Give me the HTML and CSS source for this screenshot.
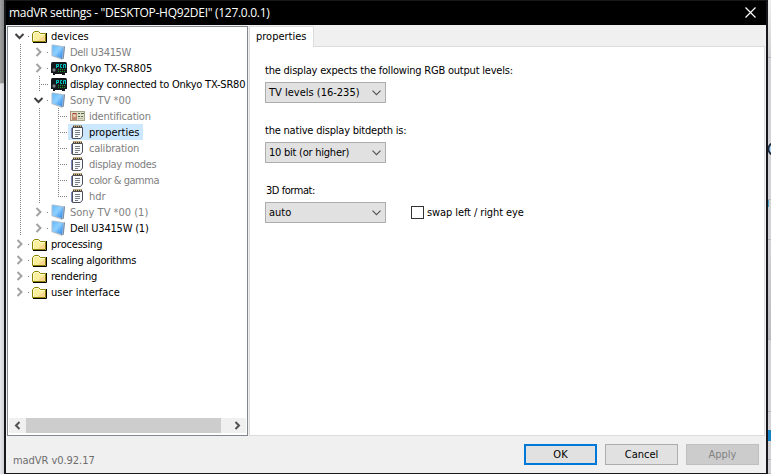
FILE: index.html
```html
<!DOCTYPE html>
<html lang="en">
<head>
<meta charset="utf-8">
<title>madVR settings</title>
<link rel="stylesheet" href="styles.css">
</head>
<body>
<svg class="defs" aria-hidden="true">
  <symbol id="folder" viewBox="0 0 16 16">
    <path d="M1 14.500H14.500V5" fill="none" stroke="#000" stroke-width="1"/>
    <path d="M.5 13.500V5.500L2.500 3.500H6.500L8.500 5.500H13.500V13.500Z" fill="#f9ee9c" stroke="#8c8400"/>
    <path d="M1.500 12.500V6L3 4.500H6L8 6.500H12.500" fill="none" stroke="#fffccf"/>
    <path d="M13 7V13H5Z" fill="#fbcb8a" opacity=".7"/>
  </symbol>
  <symbol id="monitor" viewBox="0 0 16 16">
    <path d="M.5 1L2 .5L14 2.500L12.500 14.500L10 15.500L.5 12Z" fill="#aebccc"/>
    <path d="M1.500 1.500L12.500 3.300L11 14L1.500 11.500Z" fill="url(#glass)"/>
    <path d="M13.500 2.500L12.300 14.500L10 15" fill="none" stroke="#667c98" stroke-width=".8"/>
  </symbol>
  <linearGradient id="glass" x1="0" y1="0" x2="1" y2="1">
    <stop offset="0" stop-color="#62baff"/><stop offset=".45" stop-color="#8fd0ff"/><stop offset="1" stop-color="#1f7fe8"/>
  </linearGradient>
  <symbol id="receiver" viewBox="0 0 16 16">
    <path d="M0 4Q0 2 1.500 2H14.500Q16 2 16 4V13H14V15H11V14H4V15H2V13H0Z" fill="#14171b"/>
    <path d="M5.500 8V4.500H7.500V6.500H6M11 4.500H9.500V7.500H11M12.500 8V4.500H15M14.500 4V8" fill="none" stroke="#00c4c0"/>
    <circle cx="3" cy="10" r="1.700" fill="#777b80"/>
    <path d="M7 9.500H15M7 11.500H15" stroke="#189c2b" stroke-dasharray="1 1"/>
  </symbol>
  <symbol id="card" viewBox="0 0 16 16">
    <rect x=".5" y="3.500" width="14" height="9" fill="#dedfc8" stroke="#a5a58a"/>
    <path d="M.5 3V13" stroke="#b28a72"/>
    <rect x="2" y="5" width="5" height="7" fill="#c08a72"/>
    <path d="M3 5.500H6" stroke="#a6402f"/>
    <circle cx="4.500" cy="7.500" r="1.500" fill="#ead0b5"/>
    <path d="M8 5.500H10M11 5.500H14M8 8.500H10M11 8.500H13" stroke="#526947"/>
    <path d="M8 10.500H13" stroke="#b8b79d"/>
  </symbol>
  <symbol id="notes" viewBox="0 0 16 16">
    <path d="M2.500 3.500H12.500V12L10.500 14.500H2.500Z" fill="#f8fafc" stroke="#4a505c"/>
    <path d="M1.500 4V14" stroke="#8087bb"/>
    <path d="M3 2.500H12" stroke="#4c4334" stroke-width="2" stroke-dasharray="1 1"/>
    <path d="M4 2H12" stroke="#c19a4d" stroke-width="1.500" stroke-dasharray="1 1"/>
    <path d="M5 6.500H10M5 8.500H10M5 10.500H10M5 12.500H8" stroke="#565d68" stroke-width=".8"/>
  </symbol>
  <symbol id="closed" viewBox="0 0 19 16"><path d="M6.500 4L10.500 8L6.500 12" fill="none" stroke="#a2a2a2" stroke-width="2"/></symbol>
  <symbol id="open" viewBox="0 0 19 16"><path d="M4.500 6L8.500 10L12.500 6" fill="none" stroke="#404040" stroke-width="2"/></symbol>
</svg>
<div class="desktop">
  <div class="behind-left"><div class="behind-top"></div></div>
  <main class="window">
    <header class="titlebar">
      <span class="title">madVR settings - "DESKTOP-HQ92DEI" (127.0.0.1)</span>
      <svg class="close" viewBox="0 0 11 11"><path d="M.5 .5L10.500 10.500M10.500 .5L.5 10.500" stroke="#fff" stroke-width="1.200"/></svg>
    </header>
    <div class="body">
      <section class="tree">
        <div class="rows">
          <div class="row"><svg class="cell stub"><use href="#open"/></svg><div class="item"><svg class="icon"><use href="#folder"/></svg><span>devices</span></div></div>
          <div class="row dim"><i class="cell line"></i><svg class="cell stub"><use href="#closed"/></svg><div class="item"><svg class="icon"><use href="#monitor"/></svg><span class="tight">Dell U3415W</span></div></div>
          <div class="row"><i class="cell line"></i><svg class="cell stub"><use href="#closed"/></svg><div class="item"><svg class="icon"><use href="#receiver"/></svg><span>Onkyo TX-SR805</span></div></div>
          <div class="row"><i class="cell line"></i><i class="cell tee"></i><div class="item"><svg class="icon"><use href="#receiver"/></svg><span class="snug">display connected to Onkyo TX-SR80</span></div></div>
          <div class="row dim"><i class="cell line"></i><svg class="cell stub"><use href="#open"/></svg><div class="item"><svg class="icon"><use href="#monitor"/></svg><span>Sony TV *00</span></div></div>
          <div class="row dim"><i class="cell line"></i><i class="cell line"></i><i class="cell tee"></i><div class="item"><svg class="icon"><use href="#card"/></svg><span class="snug">identification</span></div></div>
          <div class="row"><i class="cell line"></i><i class="cell line"></i><i class="cell tee"></i><div class="item selected"><svg class="icon"><use href="#notes"/></svg><span>properties</span></div></div>
          <div class="row dim"><i class="cell line"></i><i class="cell line"></i><i class="cell tee"></i><div class="item"><svg class="icon"><use href="#notes"/></svg><span class="snug">calibration</span></div></div>
          <div class="row dim"><i class="cell line"></i><i class="cell line"></i><i class="cell tee"></i><div class="item"><svg class="icon"><use href="#notes"/></svg><span class="tight">display modes</span></div></div>
          <div class="row dim"><i class="cell line"></i><i class="cell line"></i><i class="cell tee"></i><div class="item"><svg class="icon"><use href="#notes"/></svg><span class="tighter">color &amp; gamma</span></div></div>
          <div class="row dim"><i class="cell line"></i><i class="cell line"></i><i class="cell tee end"></i><div class="item"><svg class="icon"><use href="#notes"/></svg><span>hdr</span></div></div>
          <div class="row dim"><i class="cell line"></i><svg class="cell stub"><use href="#closed"/></svg><div class="item"><svg class="icon"><use href="#monitor"/></svg><span>Sony TV *00 (1)</span></div></div>
          <div class="row"><i class="cell line"></i><svg class="cell stub"><use href="#closed"/></svg><div class="item"><svg class="icon"><use href="#monitor"/></svg><span class="snug">Dell U3415W (1)</span></div></div>
          <div class="row"><svg class="cell stub"><use href="#closed"/></svg><div class="item"><svg class="icon"><use href="#folder"/></svg><span class="snug">processing</span></div></div>
          <div class="row"><svg class="cell stub"><use href="#closed"/></svg><div class="item"><svg class="icon"><use href="#folder"/></svg><span class="tight">scaling algorithms</span></div></div>
          <div class="row"><svg class="cell stub"><use href="#closed"/></svg><div class="item"><svg class="icon"><use href="#folder"/></svg><span class="snug">rendering</span></div></div>
          <div class="row"><svg class="cell stub"><use href="#closed"/></svg><div class="item"><svg class="icon"><use href="#folder"/></svg><span>user interface</span></div></div>
        </div>
        <div class="scrollbar">
          <svg class="arrow" viewBox="0 0 17 15"><path d="M10.500 4L7 7.500L10.500 11" fill="none" stroke="#505050" stroke-width="2"/></svg>
          <div class="thumb"></div>
          <svg class="arrow" viewBox="0 0 17 15"><path d="M6.500 4L10 7.500L6.500 11" fill="none" stroke="#505050" stroke-width="2"/></svg>
        </div>
      </section>
      <section class="tabs">
        <div class="tab">properties</div>
        <div class="panel">
          <div class="field">
            <label class="snug">the display expects the following RGB output levels:</label>
            <div class="select"><span>TV levels (16-235)</span><svg class="drop" viewBox="0 0 9 6"><path d="M.5 .7L4.500 4.700L8.500 .7" fill="none" stroke="#555" stroke-width="1.200"/></svg></div>
          </div>
          <div class="field">
            <label class="snug">the native display bitdepth is:</label>
            <div class="select"><span class="pick">10 bit (or higher)</span><svg class="drop" viewBox="0 0 9 6"><path d="M.5 .7L4.500 4.700L8.500 .7" fill="none" stroke="#555" stroke-width="1.200"/></svg></div>
          </div>
          <div class="field">
            <label class="format tighter">3D format:</label>
            <div class="pair">
              <div class="select"><span>auto</span><svg class="drop" viewBox="0 0 9 6"><path d="M.5 .7L4.500 4.700L8.500 .7" fill="none" stroke="#555" stroke-width="1.200"/></svg></div>
              <div class="check"></div><span class="swap">swap left / right eye</span>
            </div>
          </div>
        </div>
      </section>
    </div>
    <footer class="footer">
      <span class="version">madVR v0.92.17</span>
      <div class="button primary">OK</div>
      <div class="button">Cancel</div>
      <div class="button disabled">Apply</div>
    </footer>
  </main>
  <div class="behind-right">
    <i class="strip s1"></i>
    <i class="strip s2"><svg class="arc" viewBox="0 0 3 14"><ellipse cx="5" cy="7" rx="4.500" ry="5.500" fill="#b9dcf5" stroke="#1b2940" stroke-width="1.800"/></svg></i>
    <i class="strip s3"></i><i class="strip s4"></i><i class="strip s5"></i><i class="strip s6"></i><i class="strip s7"></i>
  </div>
</div>
</body>
</html>
```
FILE: styles.css
```css
* { box-sizing: border-box; }
body { margin: 0; overflow: hidden; font: 11px/16px "DejaVu Sans Condensed", "DejaVu Sans", sans-serif; font-stretch: condensed; color: #000; }
.defs { position: absolute; width: 0; height: 0; }
svg { display: block; flex: none; }
.desktop { display: flex; width: 771px; height: 474px; background: #d5d5d7; }
.behind-left { width: 4px; background: linear-gradient(90deg, #e5e7eb, #cfd1d5); }
.behind-top { height: 84px; background: linear-gradient(90deg, #a2a2a2, #858585); border-bottom: 1px solid #c5c5c5; }
.window { width: 764px; height: 474px; display: flex; flex-direction: column; background: #f0f0f0; border: solid #16181b; border-width: 1px 2px; }
.titlebar { height: 24px; flex: none; background: #000; color: #fff; display: flex; align-items: center; justify-content: space-between; padding: 0 10px 0 3px; font: 12px/16px "Open Sans", sans-serif; }
.title { white-space: nowrap; letter-spacing: -.29px; margin-top: -1px; }
.close { width: 11px; height: 11px; margin-top: -2px; }
.snug { letter-spacing: -.21px; }
.tight { letter-spacing: -.32px; }
.tighter { letter-spacing: -.46px; }
.body { display: flex; height: 411px; padding: 1px 1px 0; }
.tree { width: 241px; height: 410px; border: 1px solid #828790; background: #fff; display: flex; flex-direction: column; justify-content: space-between; padding: 1px; overflow: hidden; }
.rows { padding: 0 0 0 2px; overflow: hidden; }
.row { display: flex; height: 16px; white-space: nowrap; }
.dim { color: #808080; }
.cell { width: 19px; height: 16px; flex: none; }
.line { background: repeating-linear-gradient(#808080 0 1px, transparent 1px 2px) 9px 0 / 1px 16px no-repeat; }
.stub { background: repeating-linear-gradient(90deg, #808080 0 1px, transparent 1px 2px) 17px 8px / 2px 1px no-repeat; }
.tee { background: repeating-linear-gradient(#808080 0 1px, transparent 1px 2px) 9px 0 / 1px 16px no-repeat, repeating-linear-gradient(90deg, #808080 0 1px, transparent 1px 2px) 9px 8px / 10px 1px no-repeat; }
.end { background-size: 1px 8px, 10px 1px; }
.item { display: flex; gap: 3px; padding: 0 4px 0 2px; height: 16px; }
.item span { line-height: 18px; }
.selected { background: #cce8ff; }
.icon { width: 16px; height: 16px; }
.scrollbar { height: 15px; margin-bottom: 1px; display: flex; background: #f0f0f0; }
.thumb { width: 195px; margin-right: 8px; background: #cdcdcd; }
.arrow { width: 17px; height: 15px; }
.tabs { flex: 1; margin-left: 1px; display: flex; flex-direction: column; }
.tab { width: 65px; height: 21px; margin-bottom: -1px; padding: 2px 0 0 6px; background: #fff; border: 1px solid #dcdcdc; border-bottom: 0; z-index: 1; }
.panel { flex: 1; background: #fff; border: 1px solid #dcdcdc; padding: 15px 0 0 15px; }
.field { height: 60px; }
label { display: block; height: 20px; line-height: 18px; white-space: nowrap; }
.format { padding-left: 1px; }
.select { width: 121px; height: 21px; background: #e1e1e1; border: 1px solid #adadad; display: flex; align-items: center; justify-content: space-between; padding: 0 4px 0 3px; white-space: nowrap; }
.select span { line-height: 18px; padding-top: 1px; }
.pick { letter-spacing: -.24px; }
.drop { width: 9px; height: 6px; }
.pair { display: flex; align-items: center; }
.check { width: 13px; height: 13px; border: 1px solid #333; margin: 0 3px 0 25px; background: #fff; }
.swap { letter-spacing: -.1px; padding-top: 1px; }
.footer { flex: 1; display: flex; align-items: flex-start; padding: 8px 7px 0 7px; }
.version { color: #6d6d6d; margin: 9px auto 0 0; letter-spacing: -.05px; }
.button { width: 73px; height: 21px; margin-left: 8px; background: #e1e1e1; border: 1px solid #adadad; text-align: center; line-height: 20px; }
.primary { border: 2px solid #0078d7; line-height: 18px; }
.disabled { background: #ccc; border-color: #bfbfbf; color: #838383; }
.behind-right { width: 3px; display: flex; flex-direction: column; overflow: hidden; }
.strip { flex: none; background: #d2d2d4; border-bottom: 1px solid #b4b4b6; overflow: hidden; }
.s1 { height: 58px; background: linear-gradient(#f0f0f0, #cfcfd1); }
.s2 { height: 142px; padding-top: 84px; }
.arc { width: 3px; height: 14px; }
.s3 { height: 40px; background: linear-gradient(90deg, #4aa3cb 1px, transparent 1px) 0 0 / 3px 7px no-repeat #d2d2d4; }
.s4 { height: 100px; background: linear-gradient(#d2d2d4, #bcbcbe); }
.s5 { height: 72px; }
.s6 { height: 48px; background: linear-gradient(#d2d2d4 18px, #1683c6 18px 29px, #d2d2d4 29px); }
.s7 { height: 14px; }
```
